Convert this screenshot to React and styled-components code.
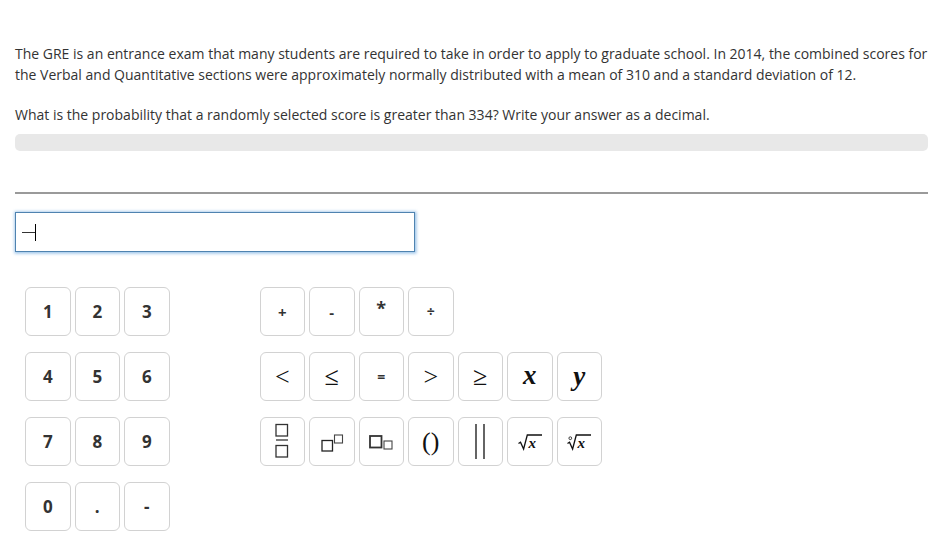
import styled, { createGlobalStyle } from "styled-components";

const GlobalStyle = createGlobalStyle`
  html, body {
    margin: 0;
    padding: 0;
    background: #fff;
  }
  body {
    font-family: "Open Sans", "Liberation Sans", sans-serif;
    color: #333;
  }
`;

const Page = styled.div`
  width: 913px;
  padding: 43px 0 0 15px;
`;

const Question = styled.p`
  margin: 0 0 19px;
  font-size: 14px;
  line-height: 21px;
  color: #333;
  white-space: nowrap;
`;

const Prompt = styled(Question)`
  margin-bottom: 9px;
`;

const HintBar = styled.div`
  height: 17px;
  border-radius: 5px;
  background: #e8e8e8;
`;

const Rule = styled.hr`
  margin: 41px 0 0;
  border: 0;
  height: 2px;
  background: #9a9a9a;
`;

const AnswerBox = styled.div`
  margin-top: 18px;
  box-sizing: border-box;
  width: 400px;
  height: 40px;
  border: 1px solid #4f83b0;
  box-shadow: 0 0 3px 1.5px rgba(95, 160, 220, 0.65);
  display: flex;
  align-items: center;
  padding-left: 6px;
`;

const Dash = styled.span`
  width: 13px;
  height: 1px;
  background: #333;
`;

const Caret = styled.span`
  width: 1px;
  height: 17px;
  background: #000;
  margin-top: 1px;
`;

const Keypad = styled.div`
  display: flex;
  gap: 90px;
  margin: 35px 0 0 10px;
`;

const KeyGrid = styled.div`
  display: grid;
  grid-template-columns: repeat(${({ $cols }) => $cols}, 45.5px);
  grid-auto-rows: 49px;
  column-gap: 4px;
  row-gap: 16px;
  align-content: start;
`;

const Key = styled.button`
  box-sizing: border-box;
  padding: 0;
  margin: 0;
  border: 1px solid #d2d2d2;
  border-radius: 6px;
  background: #fff;
  display: flex;
  align-items: center;
  justify-content: center;
  color: #333;
  font-family: "Open Sans", "Liberation Sans", sans-serif;
  font-weight: 700;
  font-size: ${({ $size }) => $size || 17}px;
  cursor: pointer;
`;

const Gap = styled.span``;

const Raised = styled.span`
  margin-top: -8px;
`;

const MathGlyph = styled.span`
  font-family: "Liberation Serif", "DejaVu Serif", serif;
  font-weight: ${({ $bold }) => ($bold ? 700 : 400)};
  font-style: ${({ $italic }) => ($italic ? "italic" : "normal")};
  font-size: ${({ $size }) => $size}px;
  line-height: 1;
  color: #111;
  margin-top: ${({ $dy }) => $dy || 0}px;
`;

const Icon = styled.svg`
  display: block;
  overflow: visible;
  margin-top: ${({ $dy }) => $dy || 0}px;
`;

function FractionIcon() {
  return (
    <Icon width="14" height="36" viewBox="0 0 14 36">
      <rect x="1" y="0.5" width="11.5" height="11.5" fill="none" stroke="#333" strokeWidth="1.3" />
      <line x1="1" y1="16" x2="13" y2="16" stroke="#333" strokeWidth="1.3" />
      <rect x="1" y="21.5" width="11.5" height="11.5" fill="none" stroke="#333" strokeWidth="1.3" />
    </Icon>
  );
}

function SuperIcon() {
  return (
    <Icon width="22" height="18" viewBox="0 0 22 18" $dy={2}>
      <rect x="1" y="6.5" width="10.5" height="10.5" fill="none" stroke="#222" strokeWidth="1.3" />
      <rect x="13.5" y="1" width="8" height="8" fill="none" stroke="#444" strokeWidth="1.1" />
    </Icon>
  );
}

function SubIcon() {
  return (
    <Icon width="24" height="16" viewBox="0 0 24 16" $dy={2}>
      <rect x="1" y="1" width="11.5" height="11.5" fill="none" stroke="#333" strokeWidth="1.8" />
      <rect x="15" y="6" width="8" height="8" fill="none" stroke="#444" strokeWidth="1.1" />
    </Icon>
  );
}

function AbsIcon() {
  return (
    <Icon width="10" height="35" viewBox="0 0 10 35">
      <line x1="1" y1="0" x2="1" y2="35" stroke="#111" strokeWidth="1.3" />
      <line x1="9" y1="0" x2="9" y2="35" stroke="#111" strokeWidth="1.3" />
    </Icon>
  );
}

function RootIcon({ index }) {
  return (
    <Icon width="24" height="16" viewBox="0 0 24 16">
      {index && (
        <circle cx="3.3" cy="4.2" r="1.4" fill="none" stroke="#111" strokeWidth="0.8" />
      )}
      <path
        d="M0.5 9.5 L2.5 8.3 L5.6 15 L9.3 1 L24 1"
        fill="none"
        stroke="#111"
        strokeWidth="1.3"
      />
      <text
        x="10.5"
        y="13.5"
        fontFamily="Liberation Serif, serif"
        fontStyle="italic"
        fontWeight="700"
        fontSize="15"
        fill="#111"
      >
        x
      </text>
    </Icon>
  );
}

const digits = ["1", "2", "3", "4", "5", "6", "7", "8", "9", "0", ".", "-"];

export default function App() {
  return (
    <Page>
      <GlobalStyle />
      <Question>
        The GRE is an entrance exam that many students are required to take in
        order to apply to graduate school. In 2014, the combined scores for
        <br />
        the Verbal and Quantitative sections were approximately normally
        distributed with a mean of 310 and a standard deviation of 12.
      </Question>
      <Prompt>
        What is the probability that a randomly selected score is greater than
        334? Write your answer as a decimal.
      </Prompt>
      <HintBar />
      <Rule />
      <AnswerBox>
        <Dash />
        <Caret />
      </AnswerBox>
      <Keypad>
        <KeyGrid $cols={3}>
          {digits.map((d) => (
            <Key key={d}>{d}</Key>
          ))}
        </KeyGrid>
        <KeyGrid $cols={7}>
          <Key $size={15}>+</Key>
          <Key $size={15}>-</Key>
          <Key $size={18}>
            <Raised>*</Raised>
          </Key>
          <Key $size={14}>÷</Key>
          <Gap />
          <Gap />
          <Gap />

          <Key>
            <MathGlyph $size={26}>&lt;</MathGlyph>
          </Key>
          <Key>
            <MathGlyph $size={26}>≤</MathGlyph>
          </Key>
          <Key $size={14}>=</Key>
          <Key>
            <MathGlyph $size={26}>&gt;</MathGlyph>
          </Key>
          <Key>
            <MathGlyph $size={26}>≥</MathGlyph>
          </Key>
          <Key>
            <MathGlyph $size={27} $italic $bold $dy={-3}>
              x
            </MathGlyph>
          </Key>
          <Key>
            <MathGlyph $size={27} $italic $bold $dy={-1}>
              y
            </MathGlyph>
          </Key>

          <Key>
            <FractionIcon />
          </Key>
          <Key>
            <SuperIcon />
          </Key>
          <Key>
            <SubIcon />
          </Key>
          <Key>
            <MathGlyph $size={26}>()</MathGlyph>
          </Key>
          <Key>
            <AbsIcon />
          </Key>
          <Key>
            <RootIcon />
          </Key>
          <Key>
            <RootIcon index />
          </Key>
        </KeyGrid>
      </Keypad>
    </Page>
  );
}
